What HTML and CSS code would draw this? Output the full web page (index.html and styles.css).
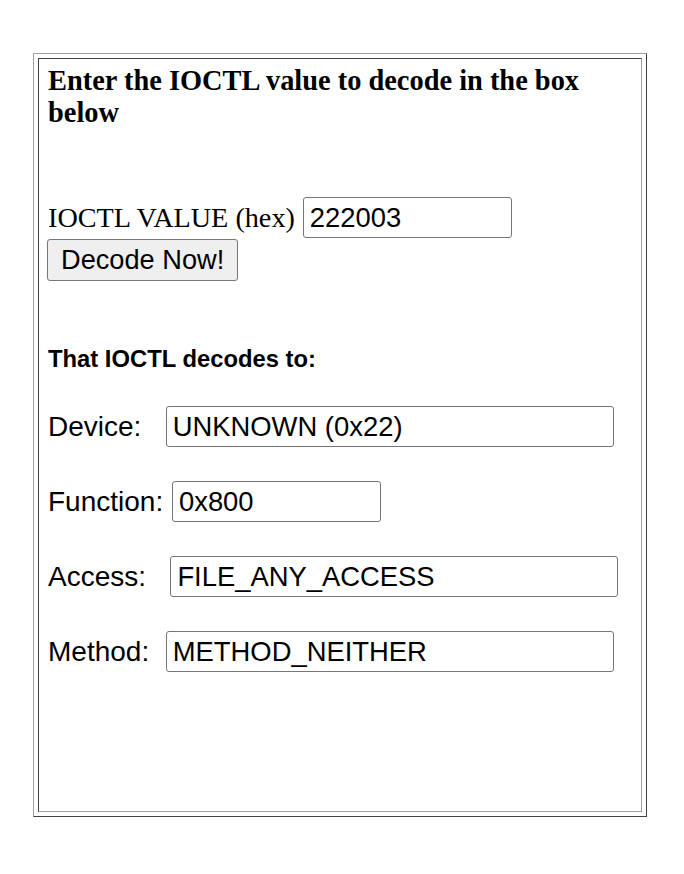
FILE: index.html
```html
<!DOCTYPE html>
<html>
<head>
<meta charset="utf-8">
<title>IOCTL Decoder</title>
<link rel="stylesheet" href="styles.css">
</head>
<body>
<div class="frame">
  <div class="cell">
    <h1 class="title">Enter the IOCTL value to decode in the box below</h1>
    <form class="decoder">
      <div class="entry">
        <span class="entry-label">IOCTL VALUE (hex)</span>
        <input class="field field-short" type="text" value="222003">
      </div>
      <button class="decode-btn" type="button">Decode Now!</button>
    </form>
    <h2 class="result-title">That IOCTL decodes to:</h2>
    <div class="row">
      <span class="row-label">Device:&nbsp;&nbsp;&nbsp;</span>
      <input class="field field-long" type="text" value="UNKNOWN (0x22)">
    </div>
    <div class="row">
      <span class="row-label">Function:&nbsp;</span>
      <input class="field field-short" type="text" value="0x800">
    </div>
    <div class="row">
      <span class="row-label">Access:&nbsp;&nbsp;&nbsp;</span>
      <input class="field field-long" type="text" value="FILE_ANY_ACCESS">
    </div>
    <div class="row">
      <span class="row-label">Method:&nbsp;&nbsp;</span>
      <input class="field field-long" type="text" value="METHOD_NEITHER">
    </div>
  </div>
</div>
</body>
</html>
```
FILE: styles.css
```css
html, body {
  background: #ffffff;
}
body {
  margin: 8px;
  color: #000000;
}
.frame {
  box-sizing: border-box;
  width: 614px;
  height: 764px;
  margin: 45px 0 0 25px;
  padding: 4px;
  border: 1px solid;
  border-color: #a0a0a0 #404040 #404040 #a0a0a0;
}
.cell {
  box-sizing: border-box;
  height: 754px;
  padding: 6px 9px;
  border: 1px solid;
  border-color: #404040 #a0a0a0 #a0a0a0 #404040;
}
.title {
  margin: 0;
  font-family: "Liberation Serif", serif;
  font-size: 28.4px;
  font-weight: bold;
  line-height: 32px;
}
.decoder {
  margin: 0;
}
.entry {
  display: flex;
  align-items: baseline;
  gap: 8px;
  margin-top: 68px;
}
.entry-label {
  font-family: "Liberation Serif", serif;
  font-size: 28.2px;
}
.field {
  box-sizing: border-box;
  height: 41px;
  margin: 0;
  padding: 0 6px;
  font-family: "Liberation Sans", Arial, sans-serif;
  font-size: 27.4px;
  color: #000000;
  background: #ffffff;
  border: 1px solid #767676;
  border-radius: 3px;
}
.field-short {
  width: 209px;
}
.field-long {
  width: 448px;
}
.decode-btn {
  display: block;
  box-sizing: border-box;
  height: 42px;
  margin: 1px 0 0 -1px;
  padding: 0 13px;
  font-family: "Liberation Sans", Arial, sans-serif;
  font-size: 27.2px;
  color: #000000;
  background: #efefef;
  border: 1px solid #767676;
  border-radius: 3px;
}
.result-title {
  margin: 64px 0 0;
  font-family: "Liberation Sans", Arial, sans-serif;
  font-size: 23.8px;
  font-weight: bold;
  line-height: 28px;
}
.row {
  display: flex;
  align-items: baseline;
  margin-top: 34px;
}
.result-title + .row {
  margin-top: 33px;
}
.row-label {
  font-family: "Liberation Sans", Arial, sans-serif;
  font-size: 28px;
  white-space: pre;
  margin-right: 1px;
}
```
